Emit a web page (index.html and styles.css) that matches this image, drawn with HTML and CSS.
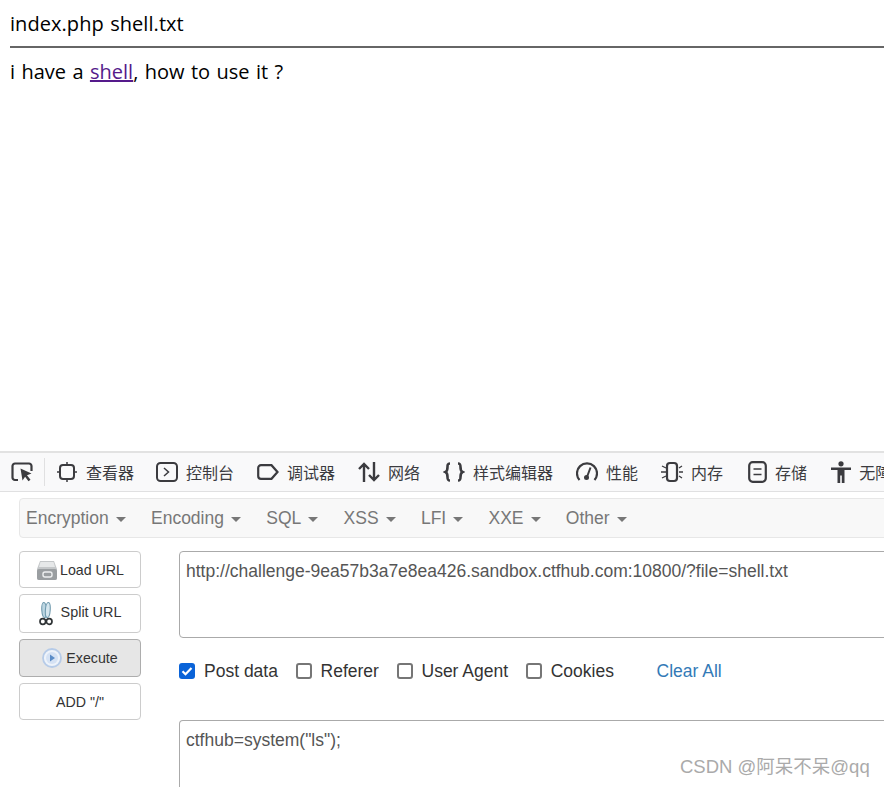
FILE: index.html
```html
<!DOCTYPE html>
<html lang="zh">
<head>
<meta charset="utf-8">
<title>index.php</title>
<link rel="stylesheet" href="styles.css">
</head>
<body>
<main class="page">
  <p class="listing">index.php shell.txt</p>
  <hr class="rule">
  <p class="question">i have a <a href="#" class="visited">shell</a>, how to use it ?</p>
</main>
<section class="devtools">
  <nav class="tabs">
    <span class="picker">
      <svg width="24" height="24" viewBox="0 0 24 24" fill="none"><path d="M8 20H5a2.500 2.500 0 0 1-2.500-2.500V6A2.500 2.500 0 0 1 5 3.500h14A2.500 2.500 0 0 1 21.500 6v5" stroke="#3b3b3f" stroke-width="2.200"/><path d="M10.500 8.500l11 5-4.500 1.800 3.500 4.500-2 1.500-3.400-4.600-2.600 3.800z" fill="#3b3b3f"/></svg>
    </span>
    <span class="tab t1">
      <svg width="22" height="22" viewBox="0 0 22 22" fill="none"><rect x="4" y="4" width="14" height="14" rx="3" stroke="#3b3b3f" stroke-width="2"/><path d="M11 1v3M11 18v3M1 11h3M18 11h3" stroke="#3b3b3f" stroke-width="1.500"/></svg>
      查看器</span>
    <span class="tab t2">
      <svg width="22" height="20" viewBox="0 0 22 20" fill="none"><rect x="1" y="1" width="20" height="18" rx="3.500" stroke="#3b3b3f" stroke-width="2"/><path d="M8 6l4.500 4L8 14" stroke="#3b3b3f" stroke-width="1.500"/></svg>
      控制台</span>
    <span class="tab t3">
      <svg width="22" height="16" viewBox="0 0 22 16" fill="none"><path d="M4 1.200h10.500l6 6.800-6 6.800H4A2.800 2.800 0 0 1 1.200 12V4A2.800 2.800 0 0 1 4 1.200z" stroke="#3b3b3f" stroke-width="2.200"/></svg>
      调试器</span>
    <span class="tab t4">
      <svg width="22" height="22" viewBox="0 0 22 22" fill="none"><path d="M6 21V3M1 8l5-5 5 5M16 1v18M11 14l5 5 5-5" stroke="#3b3b3f" stroke-width="2.400"/></svg>
      网络</span>
    <span class="tab t5">
      <svg width="22" height="20" viewBox="0 0 22 20" fill="none"><path d="M7 1.500c-2.500 0-2.500 1.500-2.500 3.500s0 4-2 5c2 1 2 3 2 5s0 3.500 2.500 3.500M15 1.500c2.500 0 2.500 1.500 2.500 3.500s0 4 2 5c-2 1-2 3-2 5s0 3.500-2.500 3.500" stroke="#3b3b3f" stroke-width="2.600"/></svg>
      样式编辑器</span>
    <span class="tab t6">
      <svg width="22" height="20" viewBox="0 0 22 20" fill="none"><path d="M3.500 18A10 10 0 1 1 18.500 18" stroke="#3b3b3f" stroke-width="2.200"/><path d="M14.500 5.500L11 15" stroke="#3b3b3f" stroke-width="2"/><circle cx="10.500" cy="15.500" r="2.500" fill="#3b3b3f"/></svg>
      性能</span>
    <span class="tab t7">
      <svg width="22" height="22" viewBox="0 0 22 22" fill="none"><rect x="6" y="2" width="10" height="18" rx="3" stroke="#3b3b3f" stroke-width="2.200"/><path d="M1 5l4 2M0 11h5M1 17l4-2M21 5l-3 2M22 11h-4M21 17l-3-2" stroke="#3b3b3f" stroke-width="1.300"/></svg>
      内存</span>
    <span class="tab t8">
      <svg width="19" height="22" viewBox="0 0 19 22" fill="none"><rect x="1.200" y="1.200" width="16.600" height="19.600" rx="3.500" stroke="#3b3b3f" stroke-width="2.200"/><path d="M5.500 8h8M5.500 13.500h8" stroke="#3b3b3f" stroke-width="1.600"/></svg>
      存储</span>
    <span class="tab t9">
      <svg width="20" height="22" viewBox="0 0 20 22" fill="#3b3b3f"><circle cx="10" cy="2.800" r="2.600"/><path d="M0 6.500h20v2.600h-6.500V22h-2.700v-7.500H9.200V22H6.500V9.100H0z"/></svg>
      无障碍</span>
  </nav>
</section>
<section class="hackbar">
  <nav class="menu">
    <span class="item">Encryption<b class="caret"></b></span>
    <span class="item">Encoding<b class="caret"></b></span>
    <span class="item">SQL<b class="caret"></b></span>
    <span class="item">XSS<b class="caret"></b></span>
    <span class="item">LFI<b class="caret"></b></span>
    <span class="item">XXE<b class="caret"></b></span>
    <span class="item">Other<b class="caret"></b></span>
  </nav>
  <div class="panel">
    <div class="actions">
      <button class="btn load">
        <svg width="22" height="20" viewBox="0 0 22 20"><path d="M4 1h14l3 8v9a2 2 0 0 1-2 2H3a2 2 0 0 1-2-2V9z" fill="#c4c7c9"/><path d="M4.500 2h13l1.500 5H3z" fill="#e6e8e9"/><rect x="1" y="9" width="20" height="11" rx="2" fill="#9a9ea1"/><rect x="7" y="12" width="9" height="5" rx="2" fill="none" stroke="#eef0f1" stroke-width="1.400"/></svg>
        <span>Load URL</span></button>
      <button class="btn split">
        <svg width="14" height="24" viewBox="0 0 14 24" fill="none"><ellipse cx="5.200" cy="8" rx="2.400" ry="7.500" transform="rotate(-4 5.200 8)" fill="#bcd6e2" stroke="#6f99ad" stroke-width="1.100"/><ellipse cx="8.800" cy="8" rx="2.400" ry="7.500" transform="rotate(4 8.800 8)" fill="#d5e6ee" stroke="#6f99ad" stroke-width="1.100"/><circle cx="3.800" cy="19.500" r="2.800" stroke="#2f3436" stroke-width="1.700"/><circle cx="10.200" cy="19.500" r="2.800" stroke="#2f3436" stroke-width="1.700"/></svg>
        <span class="raised">Split URL</span></button>
      <button class="btn run">
        <svg width="20" height="20" viewBox="0 0 20 20"><circle cx="10" cy="10" r="9" fill="#eef3fa" stroke="#b6cbe8" stroke-width="1.800"/><circle cx="10" cy="10" r="6" fill="#d5e2f4"/><path d="M8 6.500l5 3.500-5 3.500z" fill="#5b8cc7"/></svg>
        <span>Execute</span></button>
      <button class="btn">ADD "/"</button>
    </div>
    <div class="fields">
      <div class="box url">http://challenge-9ea57b3a7e8ea426.sandbox.ctfhub.com:10800/?file=shell.txt</div>
      <div class="options">
        <label class="opt"><span class="check on"><svg width="16" height="16" viewBox="0 0 16 16" fill="none"><path d="M3.500 8.300l3 3 6-6.300" stroke="#fff" stroke-width="2.200"/></svg></span>Post data</label>
        <label class="opt"><span class="check"></span>Referer</label>
        <label class="opt"><span class="check"></span>User Agent</label>
        <label class="opt"><span class="check"></span>Cookies</label>
        <a class="clear" href="#">Clear All</a>
      </div>
      <div class="box post">ctfhub=system("ls");</div>
    </div>
  </div>
</section>
<div class="watermark">CSDN @阿呆不呆@qq</div>
</body>
</html>
```
FILE: styles.css
```css
html, body {
  margin: 0;
  padding: 0;
  width: 884px;
  height: 787px;
  overflow: hidden;
  background: #fff;
}
body {
  position: relative;
  font-family: "Liberation Sans", "Noto Sans CJK SC", sans-serif;
}
.page {
  height: 451px;
  padding-left: 10px;
  font-family: "Open Sans", "Noto Sans", sans-serif;
  font-size: 20px;
  color: #000;
}
.listing { margin: 0; padding-top: 10px; line-height: 28px; height: 36px; letter-spacing: 0.06px; word-spacing: 1.1px; }
.rule { margin: 0; border: 0; height: 2px; background: #666; }
.question { margin: 0; padding-top: 10px; line-height: 28px; letter-spacing: 0.03px; word-spacing: 1.1px; }
.visited { color: #551a8b; }

.devtools {
  height: 38px;
  border-top: 2px solid #e2e2e2;
  border-bottom: 1px solid #e0e0e1;
  background: #f9f9fa;
  overflow: hidden;
}
.tabs {
  display: flex;
  align-items: center;
  height: 38px;
  white-space: nowrap;
  font-size: 16px;
  color: #3b3b3f;
}
.picker {
  display: flex;
  align-items: center;
  height: 28px;
  width: 34px;
  padding-left: 10px;
  border-right: 1px solid #e0e0e1;
  flex: none;
}
.tab { display: flex; align-items: center; gap: 8px; flex: none; }
.t1 { margin-left: 11px; }
.t2 { margin-left: 22px; }
.t3 { margin-left: 23px; }
.t4 { margin-left: 23px; }
.t5 { margin-left: 23px; }
.t6 { margin-left: 23px; }
.t7 { margin-left: 23px; }
.t8 { margin-left: 25px; }
.t9 { margin-left: 24px; }

.hackbar { padding: 6px 0 0 19px; }
.menu {
  display: flex;
  align-items: center;
  height: 38px;
  width: 900px;
  padding-left: 6px;
  background: #f8f8f8;
  border: 1px solid #e7e7e7;
  border-radius: 4px;
  font-size: 17.5px;
  color: #777;
  white-space: nowrap;
}
.item { display: flex; align-items: center; flex: none; margin-right: 25.3px; }
.caret {
  width: 0;
  height: 0;
  margin-left: 7px;
  margin-top: 2px;
  border-top: 5px solid #777;
  border-left: 5px solid transparent;
  border-right: 5px solid transparent;
}
.panel { display: flex; margin-top: 13px; }
.actions { width: 122px; flex: none; display: flex; flex-direction: column; gap: 6px; }
.btn {
  display: flex;
  align-items: center;
  justify-content: center;
  gap: 2px;
  height: 37px;
  padding: 0;
  background: #fff;
  border: 1px solid #ccc;
  border-radius: 4px;
  font-family: "Liberation Sans", sans-serif;
  font-size: 14.2px;
  color: #333;
}
.split { height: 39px; gap: 8px; font-size: 14.4px; }
.raised { padding-bottom: 3px; }
.run { height: 38px; background: #e6e6e6; border-color: #adadad; gap: 4px; }
.fields { margin-left: 38px; width: 740px; flex: none; }
.box {
  box-sizing: border-box;
  width: 800px;
  padding: 8px 6px;
  border: 1px solid #aaa;
  border-radius: 4px;
  font-size: 17.5px;
  line-height: 22px;
  color: #555;
  background: #fff;
}
.url { height: 87px; }
.post { height: 90px; margin-top: 16px; border-bottom: 0; }
.options {
  display: flex;
  align-items: center;
  height: 66px;
  font-size: 17.5px;
  color: #333;
  white-space: nowrap;
}
.opt { display: flex; align-items: center; gap: 9px; flex: none; margin-right: 17.6px; }
.check {
  box-sizing: border-box;
  display: block;
  width: 16px;
  height: 16px;
  border: 2px solid #767676;
  border-radius: 3px;
  background: #fff;
}
.check.on { border: 0; background: #0a63d8; }
.check svg { display: block; }
.clear { margin-left: 25px; color: #337ab7; text-decoration: none; flex: none; }
.watermark {
  position: absolute;
  left: 680px;
  top: 755px;
  font-size: 18.5px;
  line-height: 24px;
  color: #aaa;
  white-space: nowrap;
}
```
